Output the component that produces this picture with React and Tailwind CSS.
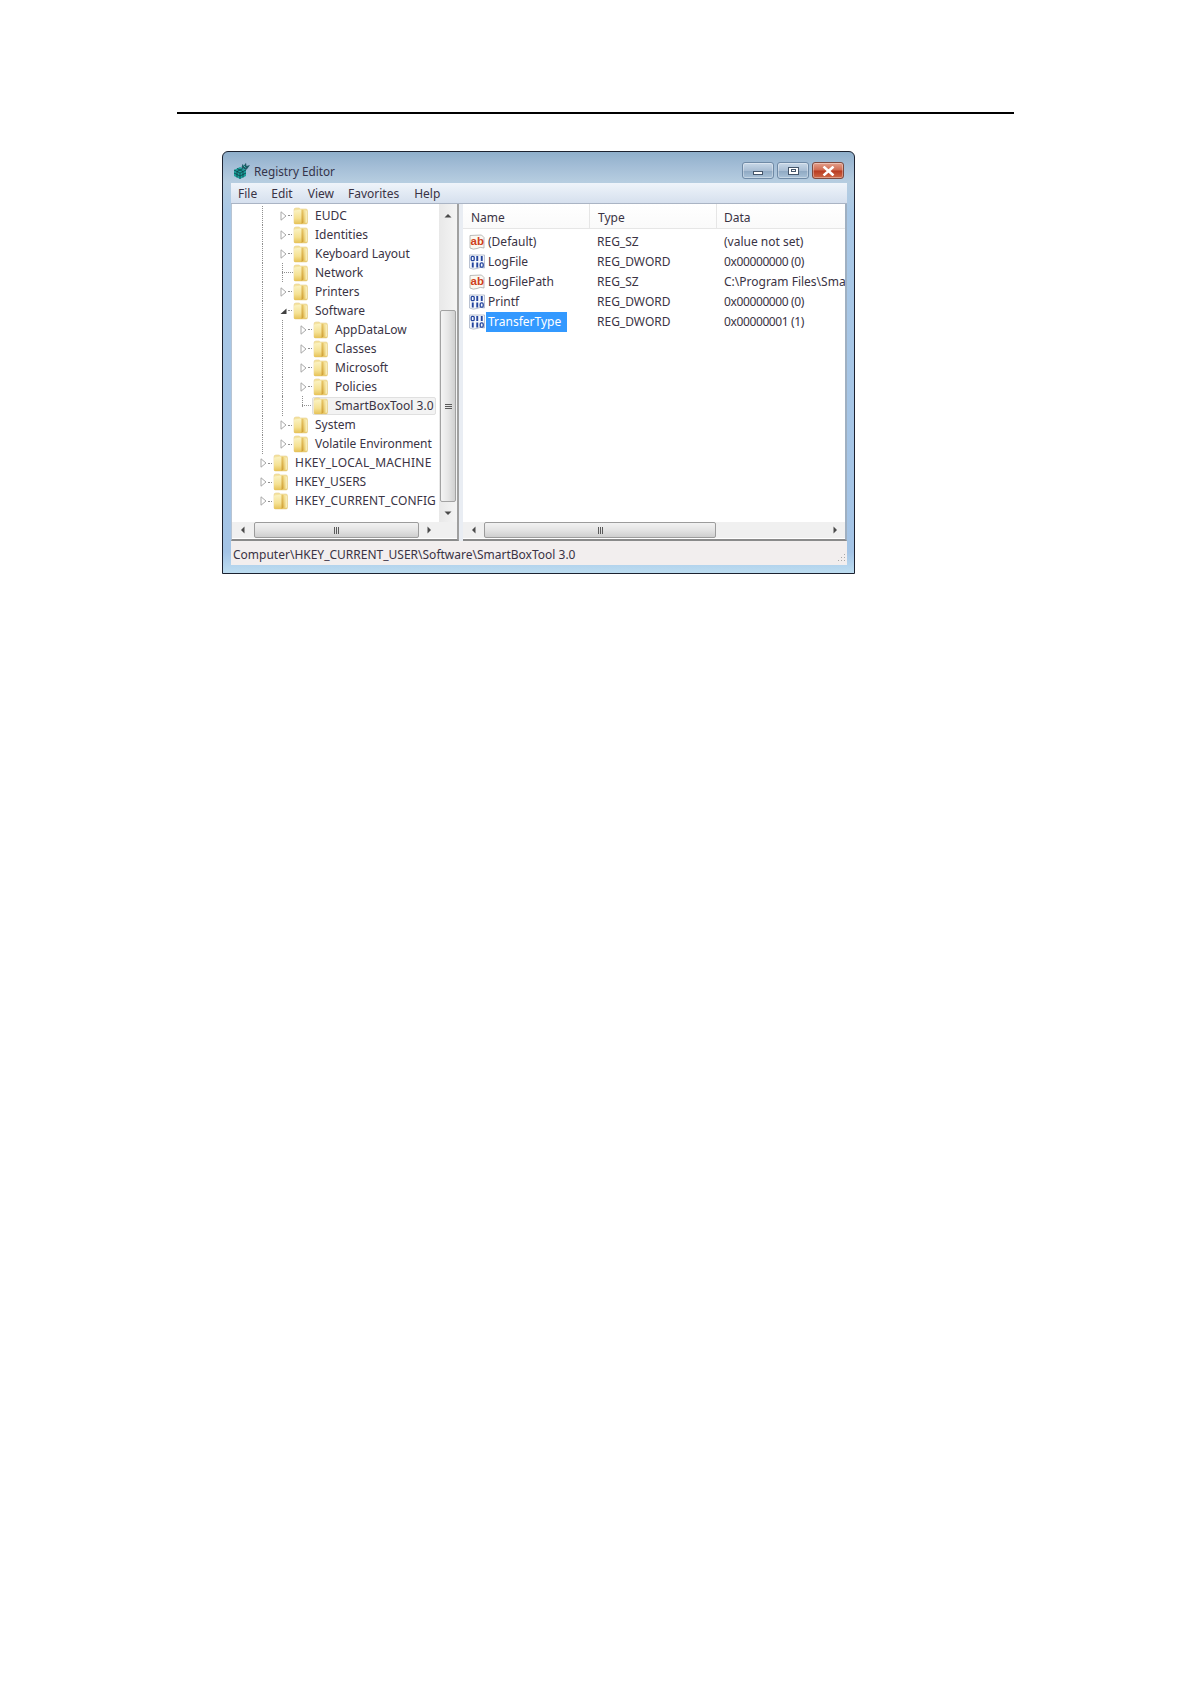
const TREE = [
  { t: "EUDC", l: 1, e: "c" },
  { t: "Identities", l: 1, e: "c" },
  { t: "Keyboard Layout", l: 1, e: "c" },
  { t: "Network", l: 1, e: "n" },
  { t: "Printers", l: 1, e: "c" },
  { t: "Software", l: 1, e: "o" },
  { t: "AppDataLow", l: 2, e: "c" },
  { t: "Classes", l: 2, e: "c" },
  { t: "Microsoft", l: 2, e: "c" },
  { t: "Policies", l: 2, e: "c" },
  { t: "SmartBoxTool 3.0", l: 2, e: "n", last: true, sel: true },
  { t: "System", l: 1, e: "c" },
  { t: "Volatile Environment", l: 1, e: "c" },
  { t: "HKEY_LOCAL_MACHINE", l: 0, e: "c", cls: "tracking-[0.25px]" },
  { t: "HKEY_USERS", l: 0, e: "c" },
  { t: "HKEY_CURRENT_CONFIG", l: 0, e: "c", cls: "tracking-[0.1px]" },
];

const VALUES = [
  { n: "(Default)", k: "s", ty: "REG_SZ", d: "(value not set)" },
  { n: "LogFile", k: "b", ty: "REG_DWORD", d: "0x00000000 (0)", num: true },
  { n: "LogFilePath", k: "s", ty: "REG_SZ", d: "C:\\Program Files\\SmartBoxTool 3.0\\log.txt" },
  { n: "Printf", k: "b", ty: "REG_DWORD", d: "0x00000000 (0)", num: true },
  { n: "TransferType", k: "b", ty: "REG_DWORD", d: "0x00000001 (1)", num: true, sel: true },
];

function Folder() {
  return (
    <svg width="15" height="18" viewBox="0 0 15 18" className="shrink-0">
      <defs>
        <linearGradient id="fb" x1="0" y1="0" x2="0" y2="1">
          <stop offset="0" stopColor="#f6e6a6" />
          <stop offset="1" stopColor="#e9c969" />
        </linearGradient>
        <linearGradient id="ff" x1="0" y1="0" x2="0" y2="1">
          <stop offset="0" stopColor="#fbf3c4" />
          <stop offset="0.6" stopColor="#f5e193" />
          <stop offset="1" stopColor="#e6c257" />
        </linearGradient>
        <linearGradient id="fs" x1="0" y1="0" x2="0" y2="1">
          <stop offset="0" stopColor="#e8c76a" />
          <stop offset="1" stopColor="#cf9f34" />
        </linearGradient>
      </defs>
      <path d="M1 3 Q1 1 3 1 L6 1 L7.5 2 L13 2 Q14.5 2 14.5 4 L14.5 15.5 Q14.5 17 13 17 L2.5 17 Q1 17 1 15.5 Z" fill="url(#fb)" stroke="#e0c67c" strokeWidth="0.5" />
      <path d="M1 3.5 L8.5 2.5 L8.5 17 L2.5 17 Q1 17 1 15.5 Z" fill="url(#ff)" />
      <path d="M8.5 2.5 L10.5 3 L10.5 15.5 L8.5 17 Z" fill="url(#fs)" />
      <path d="M12.5 3.5 L14 4 L14 15.5 L12.5 16 Z" fill="#f8edb8" />
    </svg>
  );
}

function Expander({ open }) {
  return open ? (
    <svg width="7" height="10" viewBox="0 0 7 10" className="shrink-0">
      <path d="M0.5 8 L6.5 8 L6.5 2.5 Z" fill="#404040" />
    </svg>
  ) : (
    <svg width="7" height="10" viewBox="0 0 7 10" className="shrink-0">
      <path d="M1 0.8 L6 5 L1 9.2 Z" fill="#fff" stroke="#a8a8a8" strokeWidth="1" />
    </svg>
  );
}

function Guide() {
  return (
    <div className="w-[20px] h-full pl-[2px] shrink-0">
      <div className="h-full border-l border-dotted border-[#8f8f8f]" />
    </div>
  );
}

function TreeRow({ row }) {
  const guides = [];
  for (let i = 0; i < row.l; i++) guides.push(i);
  const label = "ml-[7px] text-[#3a3344] " + (row.cls || "");
  return (
    <div className="h-[19.05px] flex items-center whitespace-nowrap">
      {guides.map((g) => (
        <Guide key={g} />
      ))}
      <div className="w-[20px] h-full flex items-center shrink-0">
        {row.e === "n" ? (
          <div className={row.last ? "w-[20px] h-full pl-[2px] pb-[9px]" : "w-[20px] h-full pl-[2px]"}>
            <div className="h-full border-l border-dotted border-[#8f8f8f]" />
          </div>
        ) : (
          <>
            <Expander open={row.e === "o"} />
            <div className="w-[4px] ml-[1px] border-t border-dotted border-[#8f8f8f]" />
          </>
        )}
      </div>
      {row.e === "n" && <div className="w-0 -ml-[18px] mr-[18px] flex"><div className="w-[11px] shrink-0 border-t border-dotted border-[#8f8f8f]" /></div>}
      <div className="-ml-[7px]" />
      {row.sel ? (
        <div className="flex items-center h-[18px] w-[124px] -ml-px rounded-[2px] border border-[#e0e0e0] bg-[#f3f3f3]">
          <Folder />
          <span className={label}>{row.t}</span>
        </div>
      ) : (
        <>
          <Folder />
          <span className={label}>{row.t}</span>
        </>
      )}
    </div>
  );
}

function Arrow({ dir }) {
  const p = {
    up: "M0.5 5.5 L4 2 L7.5 5.5 Z",
    down: "M0.5 2.5 L4 6 L7.5 2.5 Z",
    left: "M5.5 0.5 L2 4 L5.5 7.5 Z",
    right: "M2.5 0.5 L6 4 L2.5 7.5 Z",
  }[dir];
  return (
    <svg width="8" height="8" viewBox="0 0 8 8" className="shrink-0">
      <path d={p} fill="#4a4a4a" />
    </svg>
  );
}

function Grip({ vertical }) {
  const bars = [0, 1, 2];
  return vertical ? (
    <div className="flex flex-col gap-[1px]">
      {bars.map((b) => (
        <div key={b} className="w-[7px] h-[1px] bg-[#5a5a5a]" />
      ))}
    </div>
  ) : (
    <div className="flex gap-[1px]">
      {bars.map((b) => (
        <div key={b} className="w-[1px] h-[7px] bg-[#5a5a5a]" />
      ))}
    </div>
  );
}

function HScroll({ thumb, after }) {
  return (
    <div className="h-[16px] flex items-center bg-[#f0f0f0]">
      <div className="w-[22px] flex justify-center shrink-0"><Arrow dir="left" /></div>
      <div className={thumb + " h-[16px] shrink-0 flex items-center justify-center rounded-[2px] border border-[#9c9c9c] bg-[linear-gradient(180deg,#f2f2f2,#e4e4e4_50%,#cfcfcf)]"}>
        <Grip />
      </div>
      <div className={after + " shrink-0"} />
      <div className="w-[10px] flex justify-center shrink-0"><Arrow dir="right" /></div>
    </div>
  );
}

function RegSz() {
  return (
    <svg width="16" height="17" viewBox="0 0 16 17" className="shrink-0">
      <path d="M1 1.5 L12.5 1 L15 3.5 L15 14 Q11 12.5 8 14.5 Q4 16 1 14 Z" fill="#fbf8f2" stroke="#a9a9a9" strokeWidth="0.8" />
      <text x="1.6" y="10.8" fontSize="11.5" fontWeight="700" fontFamily="'Liberation Sans', sans-serif" fill="#cf3f1c">ab</text>
    </svg>
  );
}

function RegBin() {
  const cells = [
    [2, 2, "o"], [6.5, 2, "i"], [11, 2, "i"],
    [2, 8.5, "i"], [6.5, 8.5, "i"], [11, 8.5, "o"],
  ];
  return (
    <svg width="16" height="17" viewBox="0 0 16 17" className="shrink-0">
      <path d="M0.5 1 L15.5 1 L15.5 14 Q11 12.5 8 14.5 Q4 16 0.5 14 Z" fill="#f5f8fc" stroke="#a9b4c6" strokeWidth="0.8" />
      {cells.map(([x, y, k], i) =>
        k === "o" ? (
          <rect key={i} x={x + 0.2} y={y + 0.4} width="3" height="4.2" rx="1.2" fill="none" stroke="#24459e" strokeWidth="1.3" />
        ) : (
          <rect key={i} x={x + 0.8} y={y} width="1.9" height="5" fill="#24459e" />
        )
      )}
    </svg>
  );
}

function RegIcon() {
  return (
    <svg width="18" height="17" viewBox="0 0 18 17" className="shrink-0">
      <path d="M1 8 L7 5 L13 8 L13 14 L7 17 L1 14 Z" fill="#1ba39c" />
      <path d="M7 11 L7 17 M1 8 L7 11 L13 8 M4 6.5 L10 9.5 M10 6.5 L4 9.5 M4 9.5 L4 15.5 M10 9.5 L10 15.5 M1 11 L7 14 L13 11" fill="none" stroke="#0f3d47" strokeWidth="0.8" />
      <path d="M8.5 5.5 L9.5 2 L11 3.5 L13 0.8 L13.5 4 L17 3 L14.5 6.5 L13 8 Z" fill="#1f5a66" />
      <path d="M10.5 3.5 L12.5 5.5" stroke="#48d0bc" strokeWidth="1" />
    </svg>
  );
}

function CapButton({ className, children }) {
  return (
    <div className={"w-[32px] h-[17px] rounded-[3px] border flex items-center justify-center shadow-[inset_0_0_0_1px_rgba(255,255,255,0.35)] " + className}>
      {children}
    </div>
  );
}

export default function App() {
  return (
    <div className="w-[1190px] min-h-[1684px] bg-white pt-[112px] pl-[177px] text-[12px] leading-none font-['Noto_Sans',sans-serif] text-[#3a3344]">
      <div className="w-[837px] h-[2px] bg-black" />
      <div className="ml-[45px] mt-[37px] w-[633px] h-[423px] rounded-t-[6px] border border-[#1c2230] bg-[#a9c6e0] bg-[linear-gradient(180deg,#8fafcb_0px,#a3bdd6_14px,#b6cde0_30px,#a9c8e6_60px,#a4c4e6_400px,#bcdcf0_420px)]">
        {/* title bar */}
        <div className="h-[31px] flex items-center pl-[10px] pr-[10px]">
          <div className="mt-[6px] shrink-0"><RegIcon /></div>
          <span className="ml-[3px] mt-[8px] text-[11.75px] text-[#34344a]">Registry Editor</span>
          <div className="ml-auto flex gap-[3px] mt-[6px]">
            <CapButton className="border-[#6f8aa6] bg-[linear-gradient(180deg,#c8d8e8,#a9bed4_50%,#8ea8c2_52%,#a9c2d8)]">
              <div className="w-[10px] h-[4px] mt-[5px] border border-[#44556a] bg-white" />
            </CapButton>
            <CapButton className="border-[#6f8aa6] bg-[linear-gradient(180deg,#c8d8e8,#a9bed4_50%,#8ea8c2_52%,#a9c2d8)]">
              <div className="w-[11px] h-[8px] border border-[#44556a] bg-white flex items-center justify-center">
                <div className="w-[5px] h-[3px] border border-[#44556a]" />
              </div>
            </CapButton>
            <CapButton className="border-[#7d4a40] bg-[linear-gradient(180deg,#e4a08c,#cf6a50_48%,#b83a20_52%,#cf6a48)]">
              <svg width="13" height="10" viewBox="0 0 13 10">
                <path d="M2.5 1.5 L10.5 8.5 M10.5 1.5 L2.5 8.5" stroke="#fff" strokeWidth="2.6" strokeLinecap="square" />
              </svg>
            </CapButton>
          </div>
        </div>

        <div className="ml-[8px] w-[616px]">
          {/* menu */}
          <div className="h-[20px] flex items-center pt-[2px] bg-[linear-gradient(180deg,#eff4fa,#e2eaf4_50%,#d6e0ee)] text-[#3a3344]">
            <span className="ml-[7px]">File</span>
            <span className="ml-[14px]">Edit</span>
            <span className="ml-[15px]">View</span>
            <span className="ml-[14px]">Favorites</span>
            <span className="ml-[15px]">Help</span>
          </div>
          <div className="h-[1px] bg-[#aab4c4]" />

          {/* panes */}
          <div className="h-[337px] flex bg-[#e9edf3]">
            {/* tree pane */}
            <div className="w-[228px] h-full border-l border-r-2 border-b-2 border-l-[#b8c4d2] border-r-[#a0a0a0] border-b-[#8a8a8a] bg-white flex flex-col">
              <div className="h-[318px] flex">
                <div className="w-[207px] pt-[2px] pl-[28px] overflow-hidden shrink-0">
                  {TREE.map((r) => (
                    <TreeRow key={r.t} row={r} />
                  ))}
                </div>
                <div className="w-[18px] h-[318px] flex flex-col items-center bg-[linear-gradient(90deg,#e8e8e8,#f4f4f4)]">
                  <div className="h-[21px] pt-[8px]"><Arrow dir="up" /></div>
                  <div className="h-[85px]" />
                  <div className="w-[16px] h-[192px] flex items-center justify-center rounded-[2px] border border-[#a2a2a2] bg-[linear-gradient(90deg,#f4f4f4,#e6e6e6_50%,#d0d0d0)]">
                    <Grip vertical />
                  </div>
                  <div className="h-[20px] pt-[7px]"><Arrow dir="down" /></div>
                </div>
              </div>
              <HScroll thumb="w-[165px]" after="w-[5px]" />
            </div>

            <div className="w-[4px]" />

            {/* list pane */}
            <div className="w-[384px] h-full border-r-2 border-b-2 border-r-[#9fb0c2] border-b-[#8a8a8a] bg-white flex flex-col">
              <div className="h-[25px] shrink-0 grid grid-cols-[127px_127px_1fr] border-b border-[#e6e6e6] bg-[linear-gradient(180deg,#ffffff,#fafafa)] items-center">
                <div className="h-full flex items-center pl-[8px] pt-[3px] border-r border-[#e6e6e6]">Name</div>
                <div className="h-full flex items-center pl-[8px] pt-[3px] border-r border-[#e6e6e6]">Type</div>
                <div className="h-full flex items-center pl-[7px] pt-[3px]">Data</div>
              </div>
              <div className="h-[293px] pt-[3px] overflow-hidden shrink-0">
                {VALUES.map((v) => (
                  <div key={v.n} className="h-[20px] grid grid-cols-[127px_127px_1fr] items-center whitespace-nowrap">
                    <div className="flex items-center pl-[6px]">
                      {v.k === "s" ? <RegSz /> : <RegBin />}
                      {v.sel ? (
                        <span className="ml-[1px] h-[20px] w-[81px] flex items-center pl-[2px] bg-[#3399ff] text-white">{v.n}</span>
                      ) : (
                        <span className="ml-[3px]">{v.n}</span>
                      )}
                    </div>
                    <div className="pl-[7px]">{v.ty}</div>
                    <div className={v.num ? "pl-[7px] overflow-hidden leading-[16px] tracking-[-0.38px]" : "pl-[7px] overflow-hidden leading-[16px]"}>{v.d}</div>
                  </div>
                ))}
              </div>
              <div className="h-[16px] flex items-center bg-[#f0f0f0]">
                <div className="w-[21px] flex justify-center shrink-0"><Arrow dir="left" /></div>
                <div className="w-[232px] h-[16px] shrink-0 flex items-center justify-center rounded-[2px] border border-[#9c9c9c] bg-[linear-gradient(180deg,#f2f2f2,#e4e4e4_50%,#cfcfcf)]">
                  <Grip />
                </div>
                <div className="ml-auto w-[20px] flex justify-center shrink-0"><Arrow dir="right" /></div>
              </div>
            </div>
          </div>

          {/* status */}
          <div className="h-[24px] flex items-center pl-[2px] pt-[3px] bg-[#f2eeee] text-[#3a3344]">
            <span>Computer\HKEY_CURRENT_USER\Software\SmartBoxTool 3.0</span>
            <svg width="10" height="10" viewBox="0 0 10 10" className="ml-auto mr-[1px] mt-[6px]">
              <path d="M8 1h1v1H8zM8 4h1v1H8zM5 4h1v1H5zM8 7h1v1H8zM5 7h1v1H5zM2 7h1v1H2z" fill="#a8a8a8" />
            </svg>
          </div>
        </div>
      </div>
    </div>
  );
}
